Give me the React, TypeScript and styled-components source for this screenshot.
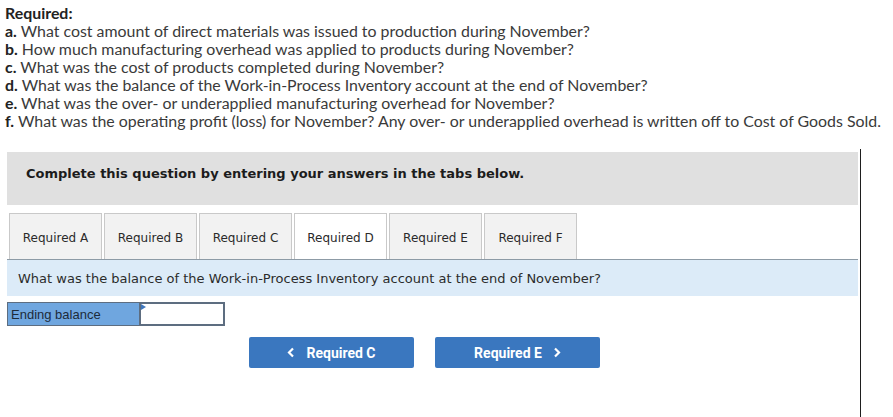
import React from "react";
import styled, { createGlobalStyle } from "styled-components";

const Global = createGlobalStyle`
  html, body { margin: 0; padding: 0; background: #fff; }
  body { font-family: "Lato", "Open Sans", sans-serif; overflow: hidden; }
`;

const Page = styled.div`
  width: 893px;
  height: 417px;
  overflow: hidden;
  position: relative;
`;

const Intro = styled.div`
  padding: 4px 0 0 5px;
  font-family: "Lato", sans-serif;
  font-size: 15.9px;
  line-height: 18px;
  color: #3a3a3a;
  white-space: nowrap;
`;

const Line = styled.div``;

const B = styled.b`
  font-weight: 700;
  color: #222;
`;

const Frame = styled.div`
  margin: 19px 0 0 7px;
  width: 851px;
  padding: 3px 2px 200px 0;
  border-right: 1px solid #1e1e1e;
`;

const Instruction = styled.div`
  height: 53px;
  box-sizing: border-box;
  background: #e0e0e0;
  padding: 14px 0 0 19px;
  font-family: "DejaVu Sans", Verdana, sans-serif;
  font-size: 13px;
  line-height: 16px;
  font-weight: 700;
  color: #1c1c1c;
`;

const TabBar = styled.div`
  margin-top: 8px;
  display: flex;
  gap: 2px;
  padding-left: 2px;
  border-bottom: 1px solid #8d9ba6;
`;

const Tab = styled.div<{ $active?: boolean }>`
  width: 93px;
  height: 46px;
  box-sizing: border-box;
  border: 1px solid #c9c9c9;
  border-bottom: none;
  background: ${(p) => (p.$active ? "#ffffff" : "#f2f2f2")};
  display: flex;
  align-items: center;
  justify-content: center;
  padding-top: 2px;
  font-family: "DejaVu Sans", Verdana, sans-serif;
  font-size: 12px;
  color: #2a2a2a;
`;

const Question = styled.div`
  height: 36px;
  background: #dcebf8;
  display: flex;
  align-items: center;
  padding-left: 11px;
  padding-top: 1px;
  box-sizing: border-box;
  font-family: "DejaVu Sans", Verdana, sans-serif;
  font-size: 13px;
  color: #2b2b2b;
`;

const AnswerRow = styled.div`
  margin-top: 6px;
  display: flex;
  height: 24px;
`;

const Label = styled.div`
  width: 132px;
  box-sizing: border-box;
  background: #6fa6df;
  border: 1px solid #5d6d80;
  border-right: none;
  display: flex;
  align-items: center;
  padding-left: 3px;
  font-family: "Liberation Sans", Arial, sans-serif;
  font-size: 13px;
  color: #1d2b3a;
`;

const InputCell = styled.div`
  position: relative;
  width: 86px;
  box-sizing: border-box;
  border: 2px solid #5d6d80;
  background: #fff;
`;

const Marker = styled.span`
  position: absolute;
  left: 0;
  top: 0;
  width: 0;
  height: 0;
  border-top: 3px solid transparent;
  border-bottom: 3px solid transparent;
  border-left: 5px solid #3f77bd;
`;

const NavRow = styled.div`
  margin-top: 11px;
  display: flex;
  gap: 21px;
  padding-left: 242px;
`;

const NavButton = styled.button`
  width: 165px;
  height: 31px;
  border: none;
  border-radius: 2px;
  background: #3a77bf;
  color: #fff;
  display: flex;
  align-items: center;
  justify-content: center;
  gap: 11px;
  font-family: "Roboto", "Liberation Sans", sans-serif;
  font-weight: 700;
  font-size: 14px;
  padding: 0;
  cursor: pointer;
`;

const Chevron = ({ dir }: { dir: "left" | "right" }) => (
  <svg width="8" height="11" viewBox="0 0 8 11">
    <path
      d={dir === "left" ? "M6 1.5 L2 5.5 L6 9.5" : "M2 1.5 L6 5.5 L2 9.5"}
      fill="none"
      stroke="#fff"
      strokeWidth="2.2"
    />
  </svg>
);

export default function App() {
  const tabs = ["A", "B", "C", "D", "E", "F"];
  return (
    <Page>
      <Global />
      <Intro>
        <Line>
          <B>Required:</B>
        </Line>
        <Line>
          <B>a.</B> What cost amount of direct materials was issued to production during November?
        </Line>
        <Line>
          <B>b.</B> How much manufacturing overhead was applied to products during November?
        </Line>
        <Line>
          <B>c.</B> What was the cost of products completed during November?
        </Line>
        <Line>
          <B>d.</B> What was the balance of the Work-in-Process Inventory account at the end of November?
        </Line>
        <Line>
          <B>e.</B> What was the over- or underapplied manufacturing overhead for November?
        </Line>
        <Line>
          <B>f.</B> What was the operating profit (loss) for November? Any over- or underapplied overhead is written off to Cost of Goods Sold.
        </Line>
      </Intro>
      <Frame>
        <Instruction>Complete this question by entering your answers in the tabs below.</Instruction>
        <TabBar>
          {tabs.map((t) => (
            <Tab key={t} $active={t === "D"}>
              Required {t}
            </Tab>
          ))}
        </TabBar>
        <Question>
          What was the balance of the Work-in-Process Inventory account at the end of November?
        </Question>
        <AnswerRow>
          <Label>Ending balance</Label>
          <InputCell>
            <Marker />
          </InputCell>
        </AnswerRow>
        <NavRow>
          <NavButton>
            <Chevron dir="left" />
            Required C
          </NavButton>
          <NavButton>
            Required E
            <Chevron dir="right" />
          </NavButton>
        </NavRow>
      </Frame>
    </Page>
  );
}
